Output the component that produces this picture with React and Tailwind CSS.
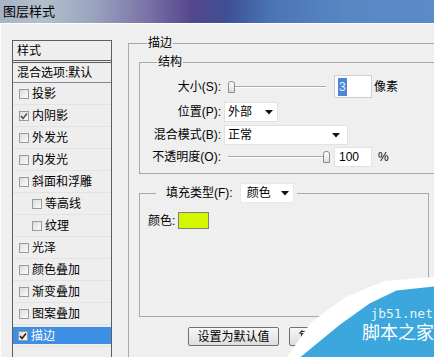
import React from "react";

const Check = ({ checked, dark }) => (
  <span className="w-[10px] h-[10px] border border-[#9a9a9a] bg-[linear-gradient(135deg,#dcdcdc,#fbfbfb)] flex items-center justify-center shrink-0">
    {checked && (
      <svg width="8" height="8" viewBox="0 0 8 8">
        <polyline points="1,4 3,6.5 7,1.5" fill="none" stroke={dark ? "#222" : "#555"} strokeWidth="1.6" />
      </svg>
    )}
  </span>
);

const Item = ({ label, checked, indent, selected }) => (
  <div className="h-[22px] border-b border-[#e3e3e3] flex items-stretch">
    <div
      className={
        selected
          ? "flex-1 my-[2px] bg-[#3d8fe6] text-white flex items-center pl-[5px]"
          : "flex-1 flex items-center " + (indent ? "pl-[19px]" : "pl-[6px]")
      }
    >
      <Check checked={checked} dark={selected} />
      <span className="ml-[3px] leading-[14px]">{label}</span>
    </div>
  </div>
);

const Arrow = () => (
  <svg width="8" height="5" viewBox="0 0 8 5" className="shrink-0">
    <polygon points="0,0 8,0 4,4.5" fill="#111" />
  </svg>
);

const Slider = ({ pos }) => (
  <div className="relative w-[104px] h-full flex items-center">
    <div className="ml-[4px] w-[98px] h-[2px] border-t border-[#a8a8a8] bg-white" />
    <div
      className="absolute top-1/2 -translate-y-1/2 w-[7px] h-[12px] rounded-t-[3px] border border-[#8c8c8c] bg-[linear-gradient(#ffffff,#dcdcdc)]"
      style={{ left: pos }}
    />
  </div>
);

export default function App() {
  return (
    <div className="w-[434px] h-[357px] overflow-hidden relative bg-[#efefef] text-[12px] text-black font-['Liberation_Sans','Noto_Sans_CJK_SC',sans-serif]">
      {/* title bar */}
      <div className="h-[23px] flex items-center pl-[3px] text-[13px] leading-[16px] bg-[linear-gradient(90deg,#a6b4c6_0%,#b4bfcd_10%,#98a2bd_22%,#7a72a8_34%,#55478c_44%,#3e4f92_52%,#4a73b4_62%,#5887c4_80%,#5a8ac8_100%)]">
        图层样式
      </div>
      <div className="flex h-[334px]">
        <div className="w-[3px] bg-[#2a3a62]" />
        <div className="flex-1 flex items-start border-l border-t border-white pl-[11px] pt-[12px]">
          {/* left list */}
          <div className="mt-[4px] w-[100px] h-[330px] border border-[#5e5e5e] bg-[#eeeeee]">
            <div className="h-[22px] flex items-center pl-[4px] border-b-[3px] border-double border-[#5e5e5e]">
              <span className="leading-[14px]">样式</span>
            </div>
            <div className="h-[20px] flex items-center pl-[4px] border-b border-[#8a8a8a]">
              <span className="leading-[14px]">混合选项:默认</span>
            </div>
            <Item label="投影" />
            <Item label="内阴影" checked />
            <Item label="外发光" />
            <Item label="内发光" />
            <Item label="斜面和浮雕" />
            <Item label="等高线" indent />
            <Item label="纹理" indent />
            <Item label="光泽" />
            <Item label="颜色叠加" />
            <Item label="渐变叠加" />
            <Item label="图案叠加" />
            <Item label="描边" checked selected />
          </div>

          {/* right panel */}
          <fieldset className="ml-[16px] w-[320px] h-[340px] border border-[#a9a9a9] pl-[10px] shrink-0">
            <legend className="ml-[8px] px-[1px] leading-[14px]">描边</legend>

            <fieldset className="mt-[5px] w-[300px] border border-[#a9a9a9] pb-[6px]">
              <legend className="ml-[17px] px-[1px] leading-[14px]">结构</legend>

              <div className="mt-[6px] h-[23px] flex items-center">
                <div className="w-[81px] text-right leading-[14px]">大小(S):</div>
                <div className="ml-[3px] h-full flex items-center">
                  <Slider pos={4} />
                  <div className="ml-[6px] w-[38px] h-full bg-white border border-[#cfcfcf] flex items-center pl-[3px]">
                    <span className="bg-[#4a86d4] text-[#e8f0ff] px-[1px] leading-[18px]">3</span>
                  </div>
                  <span className="ml-[2px] leading-[14px]">像素</span>
                </div>
              </div>

              <div className="mt-[4px] h-[20px] flex items-center">
                <div className="w-[81px] text-right leading-[14px]">位置(P):</div>
                <div className="ml-[3px] w-[54px] h-full bg-white border border-[#e2e2e2] flex items-center justify-between pl-[3px] pr-[4px]">
                  <span className="leading-[14px]">外部</span>
                  <Arrow />
                </div>
              </div>

              <div className="mt-[3px] h-[20px] flex items-center">
                <div className="w-[81px] text-right leading-[14px]">混合模式(B):</div>
                <div className="ml-[3px] w-[124px] h-full bg-white border border-[#e2e2e2] flex items-center justify-between pl-[3px] pr-[7px]">
                  <span className="leading-[14px]">正常</span>
                  <Arrow />
                </div>
              </div>

              <div className="mt-[2px] h-[20px] flex items-center">
                <div className="w-[81px] text-right leading-[14px]">不透明度(O):</div>
                <div className="ml-[3px] h-full flex items-center">
                  <Slider pos={99} />
                  <div className="ml-[6px] w-[38px] h-full bg-white border border-[#e2e2e2] flex items-center pl-[4px]">
                    <span className="leading-[14px]">100</span>
                  </div>
                  <span className="ml-[6px] leading-[14px]">%</span>
                </div>
              </div>
            </fieldset>

            <fieldset className="mt-[9px] w-[290px] h-[134px] border border-[#a9a9a9] pl-[8px]">
              <legend className="ml-[8px] pl-[10px] pr-[3px]">
                <div className="flex items-center h-[20px]">
                  <span className="leading-[14px]">填充类型(F):</span>
                  <div className="ml-[7px] w-[54px] h-full bg-white border border-[#e8e8e8] flex items-center justify-between pl-[6px] pr-[4px]">
                    <span className="leading-[14px]">颜色</span>
                    <Arrow />
                  </div>
                </div>
              </legend>
              <div className="mt-[9px] h-[17px] flex items-center">
                <span className="leading-[14px]">颜色:</span>
                <div className="ml-[3px] w-[31px] h-[17px] border border-[#808080] bg-[#d4f700]" />
              </div>
            </fieldset>

            <div className="mt-[10px] flex gap-[10px] pl-[49px]">
              <div className="w-[91px] h-[19px] border border-[#707070] rounded-[2px] bg-[linear-gradient(#f7f7f7,#dedede)] flex items-center justify-center leading-[14px]">
                设置为默认值
              </div>
              <div className="w-[91px] h-[19px] border border-[#707070] rounded-[2px] bg-[linear-gradient(#f7f7f7,#dedede)] flex items-center justify-center leading-[14px]">
                复位为默认值
              </div>
            </div>
          </fieldset>
        </div>
      </div>

      {/* watermark */}
      <div className="absolute right-0 bottom-0 w-[150px] h-[80px] z-10">
        <div className="absolute inset-0 bg-white [clip-path:polygon(2%_100%,18%_57%,41%_25%,67%_5%,100%_0%,100%_15%,11%_100%)]" />
        <div className="absolute inset-0 bg-[#3ba7dc] [clip-path:polygon(11%_100%,37%_60%,57%_33%,75%_17%,100%_12%,100%_100%)]" />
        <div className="absolute right-[1px] top-[30px] font-['DejaVu_Sans_Mono',monospace] text-[13px] leading-[13px] text-[#e6f4fb]">
          jb51.net
        </div>
        <div className="absolute right-0 top-[43px] text-[18px] leading-[22px] text-white font-['Noto_Sans_CJK_SC',sans-serif]">
          脚本之家
        </div>
      </div>
    </div>
  );
}
